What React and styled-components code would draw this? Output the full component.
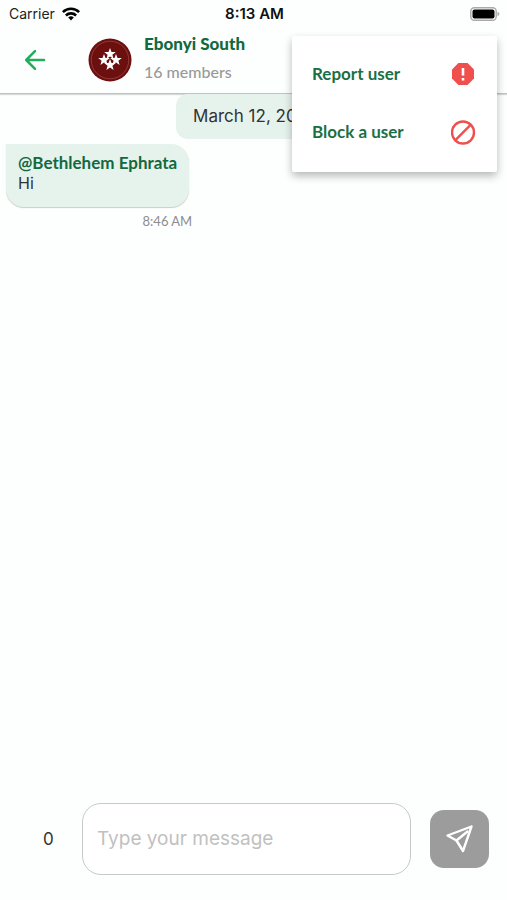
import React, { useState } from "react";
import styled, { createGlobalStyle } from "styled-components";

const GlobalStyle = createGlobalStyle`
  * {
    box-sizing: border-box;
  }
  body {
    margin: 0;
    background: #fdfffe;
    color: #333;
    font-family: Inter, "Liberation Sans", sans-serif;
  }
  h1, p {
    margin: 0;
  }
  button {
    padding: 0;
    border: none;
    background: none;
    font: inherit;
    cursor: pointer;
  }
  svg {
    display: block;
  }
`;

const Page = styled.div`
  display: flex;
  flex-direction: column;
  min-height: 100vh;
  position: relative;
`;

const StatusBar = styled.div`
  display: grid;
  grid-template-columns: 1fr auto 1fr;
  align-items: center;
  height: 27px;
  padding: 0 7px 0 9px;
  font-size: 14px;
  color: #222;
`;

const Carrier = styled.div`
  display: flex;
  align-items: center;
  gap: 7px;
`;

const Clock = styled.time`
  font-size: 15px;
  font-weight: 600;
  color: #111;
`;

const Battery = styled.svg`
  justify-self: end;
`;

const Header = styled.header`
  display: flex;
  align-items: center;
  height: 67px;
  padding: 0 24px 1px;
  border-bottom: 1px solid #bfc3c1;
  box-shadow: 0 1px 1px rgba(0, 0, 0, 0.15);
`;

const BackButton = styled.button`
  margin-right: 42px;
`;

const GroupInfo = styled.div`
  display: flex;
  flex-direction: column;
  gap: 8px;
  margin-left: 12px;
  padding-bottom: 4px;
  font-family: Lato, sans-serif;
`;

const GroupName = styled.h1`
  font-size: 17px;
  line-height: 20px;
  font-weight: 900;
  color: #12693f;
`;

const Members = styled.p`
  font-size: 16px;
  line-height: 20px;
  font-weight: 500;
  color: #999;
`;

const Menu = styled.div`
  position: absolute;
  top: 36px;
  right: 10px;
  width: 205px;
  padding: 9px 20px 11px;
  background: #fff;
  border-radius: 2px;
  box-shadow: 0 4px 8px rgba(0, 0, 0, 0.28);
`;

const MenuItem = styled.button`
  display: flex;
  align-items: center;
  justify-content: space-between;
  width: 100%;
  height: 58px;
  font-family: Lato, sans-serif;
  font-size: 17px;
  line-height: 20px;
  font-weight: 700;
  color: #1b6f47;
`;

const Messages = styled.main`
  display: flex;
  flex: 1;
  flex-direction: column;
  padding: 0 6px;
`;

const DateBadge = styled.div`
  align-self: center;
  padding: 10px 17px 11px;
  border-radius: 12px;
  background: #e6f2ec;
  font-size: 17px;
  line-height: 24px;
`;

const Message = styled.article`
  display: flex;
  flex-direction: column;
  align-self: flex-start;
  margin-top: 5px;
`;

const Bubble = styled.div`
  height: 63px;
  padding: 9px 12px;
  border-radius: 0 18px 18px 18px;
  background: #e6f2ec;
  box-shadow: 0 1px 1px rgba(0, 0, 0, 0.2);
`;

const Author = styled.p`
  font-family: Lato, sans-serif;
  font-size: 17px;
  line-height: 20px;
  font-weight: 700;
  color: #12693f;
`;

const Text = styled.p`
  font-size: 16px;
  line-height: 20px;
`;

const SentAt = styled.time`
  align-self: flex-end;
  margin: 4px -3px 0 0;
  font-family: Lato, sans-serif;
  font-size: 13px;
  line-height: 20px;
  color: #8c8c8c;
`;

const Composer = styled.form`
  display: flex;
  align-items: center;
  gap: 19px;
  padding: 0 18px 25px 43px;
`;

const Counter = styled.output`
  width: 20px;
  font-size: 17px;
`;

const MessageInput = styled.input`
  flex: 1;
  min-width: 0;
  height: 72px;
  padding: 0 14px 2px;
  border: 1px solid #c6c9c8;
  border-radius: 19px;
  background: #fff;
  font: inherit;
  font-size: 19px;
  color: #333;
  outline: none;
  &::placeholder {
    color: #bfc1c0;
    opacity: 1;
  }
`;

const SendButton = styled.button`
  display: flex;
  align-items: center;
  justify-content: center;
  width: 59px;
  height: 58px;
  border-radius: 14px;
  background: #9c9c9c;
`;

const STAR = "M0 -6 1.5 -2 5.8 -1.9 2.4 .8 3.6 5 0 2.5 -3.6 5 -2.4 .8 -5.8 -1.9 -1.5 -2Z";
const STAR_POSITIONS = [
  [22, 16],
  [16, 22],
  [28, 22],
  [22, 27],
];

function WifiIcon() {
  return (
    <svg width="18" height="14" viewBox="0 0 18 14" aria-hidden="true">
      <g fill="none" stroke="#000" strokeWidth="2.6">
        <path d="M.9 5.1a11.6 11.6 0 0 1 16.2 0" />
        <path d="M3.9 8.5a7.3 7.3 0 0 1 10.2 0" />
      </g>
      <path d="M6.2 10.6a4.2 4.2 0 0 1 5.6 0L9 13.5z" />
    </svg>
  );
}

function BatteryIcon() {
  return (
    <Battery width="30" height="14" viewBox="0 0 30 14" aria-hidden="true">
      <rect x=".8" y=".8" width="25.4" height="12.4" rx="3.5" fill="#fff" stroke="#aaa" strokeWidth="1.4" />
      <rect x="2.5" y="2.5" width="22" height="9" rx="2" />
      <path d="M27.5 4.8c2.5 1 2.5 3.4 0 4.4z" fill="#aaa" />
    </Battery>
  );
}

function GroupLogo() {
  return (
    <svg width="44" height="44" viewBox="0 0 44 44" role="img" aria-label="Group logo">
      <circle cx="22" cy="22" r="21.5" fill="#6b0f0f" />
      <circle cx="22" cy="22" r="18.8" fill="none" stroke="#a04e48" strokeWidth=".7" />
      {STAR_POSITIONS.map(([x, y]) => (
        <path key={`${x}-${y}`} d={STAR} transform={`translate(${x} ${y})`} fill="#fff" />
      ))}
    </svg>
  );
}

function App() {
  const [message, setMessage] = useState("");

  return (
    <Page>
      <GlobalStyle />
      <StatusBar>
        <Carrier>
          Carrier
          <WifiIcon />
        </Carrier>
        <Clock>8:13 AM</Clock>
        <BatteryIcon />
      </StatusBar>
      <Header>
        <BackButton type="button" aria-label="Back">
          <svg width="22" height="22" viewBox="0 0 22 22" fill="none" stroke="#22ad5c" strokeWidth="2.5" strokeLinecap="round" strokeLinejoin="round">
            <path d="M20 11H2.5M11 2.2 2.2 11l8.8 8.8" />
          </svg>
        </BackButton>
        <GroupLogo />
        <GroupInfo>
          <GroupName>Ebonyi South</GroupName>
          <Members>16 members</Members>
        </GroupInfo>
      </Header>
      <Menu>
        <MenuItem type="button">
          Report user
          <svg width="26" height="26" viewBox="0 0 26 26" aria-hidden="true">
            <path d="M7.4 2h9.2L23 8.4v9.2L16.6 24H7.4L1 17.6V8.4z" fill="#ef504e" />
            <path d="M12 7v7.4M12 17v2.6" stroke="#fff" strokeWidth="2.6" />
          </svg>
        </MenuItem>
        <MenuItem type="button">
          Block a user
          <svg width="26" height="26" viewBox="0 0 26 26" fill="none" stroke="#ef504e" strokeWidth="2.4" aria-hidden="true">
            <circle cx="12" cy="13.5" r="11" />
            <path d="M4.2 21.3 19.8 5.7" />
          </svg>
        </MenuItem>
      </Menu>
      <Messages>
        <DateBadge>March 12, 2021</DateBadge>
        <Message>
          <Bubble>
            <Author>@Bethlehem Ephrata</Author>
            <Text>Hi</Text>
          </Bubble>
          <SentAt>8:46 AM</SentAt>
        </Message>
      </Messages>
      <Composer onSubmit={(e) => e.preventDefault()}>
        <Counter>{message.length}</Counter>
        <MessageInput
          aria-label="Message"
          placeholder="Type your message"
          value={message}
          onChange={(e) => setMessage(e.target.value)}
        />
        <SendButton type="submit" aria-label="Send">
          <svg width="30" height="30" viewBox="0 0 30 30" fill="none" stroke="#fff" strokeWidth="2.4" strokeLinejoin="round" strokeLinecap="round">
            <path d="M26.5 2.5 2.5 11.5l9 5L18 27z" />
            <path d="M11.5 16.5 22.5 7.5" />
          </svg>
        </SendButton>
      </Composer>
    </Page>
  );
}

export default App;
